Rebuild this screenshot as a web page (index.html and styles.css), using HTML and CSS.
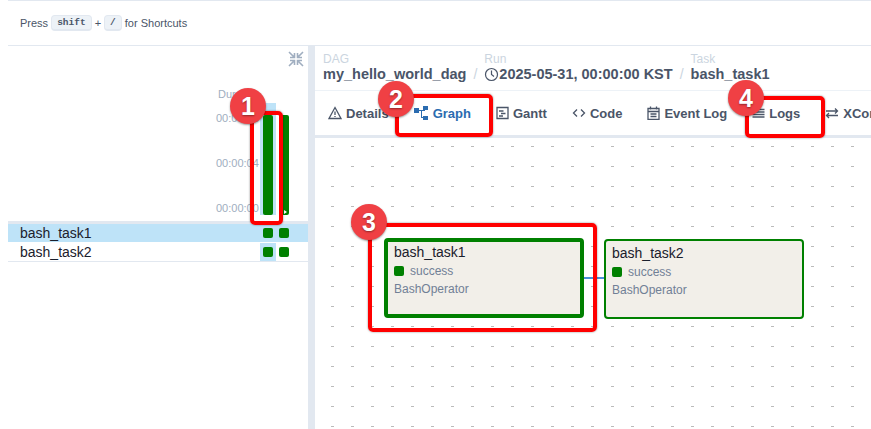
FILE: index.html
```html
<!DOCTYPE html>
<html lang="en">

<head>
    <meta charset="UTF-8">
    <title>my_hello_world_dag</title>
    <link rel="stylesheet" href="styles.css">
</head>

<body>
    <div class="page">
        <header class="shortcuts">
            <span>Press</span>
            <kbd>shift</kbd>
            <span>+</span>
            <kbd>/</kbd>
            <span>for Shortcuts</span>
        </header>

        <main class="main">
            <section class="left">
                <div class="collapse">
                    <svg width="16" height="16" viewBox="0 0 16 16" fill="none" stroke="#a0aec0" stroke-width="1.6">
                        <path d="M1 1l4.5 4.5M6.5 2v4.500H2M15 1l-4.500 4.500M9.500 2v4.500H14M1 15l4.500-4.500M6.500 14V9.500H2M15 15l-4.500-4.500M9.500 14V9.500H14"/>
                    </svg>
                </div>
                <div class="chart">
                    <div class="duration">Duration</div>
                    <div class="plot">
                        <div class="ticks">
                            <span>00:00:08</span>
                            <span>00:00:04</span>
                            <span>00:00:00</span>
                        </div>
                        <div class="bars">
                            <div class="bar-col selected"><div class="bar"></div></div>
                            <div class="bar-col"><div class="bar"></div><i class="play"></i></div>
                        </div>
                    </div>
                </div>
                <div class="rows-top"></div>
                <div class="row row-on">
                    <span class="name">bash_task1</span>
                    <div class="cells">
                        <div class="cell"><b></b></div>
                        <div class="cell"><b></b></div>
                    </div>
                </div>
                <div class="row">
                    <span class="name">bash_task2</span>
                    <div class="cells">
                        <div class="cell selected"><b></b></div>
                        <div class="cell"><b></b></div>
                    </div>
                </div>
            </section>

            <div class="divider"></div>

            <section class="right">
                <div class="crumbs">
                    <div class="crumb">
                        <small>DAG</small>
                        <strong>my_hello_world_dag</strong>
                    </div>
                    <span class="slash">/</span>
                    <div class="crumb">
                        <small>Run</small>
                        <strong class="run">
                            <svg width="15" height="15" viewBox="0 0 15 15" fill="none" stroke="#4a5568" stroke-width="1.200">
                                <circle cx="7.500" cy="7.500" r="6"/>
                                <path d="M7.500 3.500v4l2.500 2"/>
                            </svg>2025-05-31, 00:00:00 KST
                        </strong>
                    </div>
                    <span class="slash">/</span>
                    <div class="crumb">
                        <small>Task</small>
                        <strong>bash_task1</strong>
                    </div>
                </div>

                <nav class="tabs">
                    <a class="tab">
                        <svg width="14" height="14" viewBox="0 0 14 14" fill="none" stroke="currentColor" stroke-width="1.300">
                            <path d="M7 1.500L13 12.500H1zM7 5.500v3.500M7 10v1"/>
                        </svg>Details
                    </a>
                    <a class="tab active">
                        <svg width="15" height="14" viewBox="0 0 15 14" fill="currentColor">
                            <path d="M0 2h5v5H0zM9 0h5v4H9zM9 10h5v4H9zM5 4h6v1H8v6h3v1H7V5H5z"/>
                        </svg>Graph
                    </a>
                    <a class="tab">
                        <svg width="13" height="14" viewBox="0 0 13 14" fill="none" stroke="currentColor" stroke-width="1.300">
                            <path d="M1 1.500h11v11H1zM3 5h4.500M5 7.500h4.500M3 10h4"/>
                        </svg>Gantt
                    </a>
                    <a class="tab">
                        <svg width="14" height="14" viewBox="0 0 14 14" fill="none" stroke="currentColor" stroke-width="1.300">
                            <path d="M5 3.500L1.500 7 5 10.500M9 3.500L12.500 7 9 10.500"/>
                        </svg>Code
                    </a>
                    <a class="tab">
                        <svg width="13" height="14" viewBox="0 0 13 14" fill="none" stroke="currentColor" stroke-width="1.300">
                            <path d="M1 2.500h11v11H1zM3.500 0.500v3M9.500 0.500v3M1 5.500h11M3.500 8h6M3.500 10.500h6"/>
                        </svg>Event Log
                    </a>
                    <a class="tab">
                        <svg width="13" height="14" viewBox="0 0 13 14" fill="none" stroke="currentColor" stroke-width="1.300">
                            <path d="M0.500 3.500h12M0.500 6h12M0.500 8.500h12M0.500 11h12"/>
                        </svg>Logs
                    </a>
                    <a class="tab">
                        <svg width="14" height="14" viewBox="0 0 14 14" fill="none" stroke="currentColor" stroke-width="1.300">
                            <path d="M1 5h11.500M10 2.500L12.500 5 10 7.500M13 9.500H1.500M4 7l-2.500 2.500L4 12"/>
                        </svg>XCom
                    </a>
                </nav>

                <div class="canvas">
                    <div class="edge"></div>
                    <div class="node node-on">
                        <div class="node-name">bash_task1</div>
                        <div class="node-state"><b></b>success</div>
                        <div class="node-type">BashOperator</div>
                    </div>
                    <div class="node node-two">
                        <div class="node-name">bash_task2</div>
                        <div class="node-state"><b></b>success</div>
                        <div class="node-type">BashOperator</div>
                    </div>
                </div>
            </section>
        </main>

        <div class="mark mark-1"></div>
        <div class="mark mark-2"></div>
        <div class="mark mark-3"></div>
        <div class="mark mark-4"></div>
        <div class="badge badge-1">1</div>
        <div class="badge badge-2">2</div>
        <div class="badge badge-3">3</div>
        <div class="badge badge-4">4</div>
    </div>
</body></html>
```

FILE: styles.css
```css
* {
    box-sizing: border-box;
}

body {
    margin: 0;
    background: white;
    font-family: "Liberation Sans", Arial, sans-serif;
    color: #2d3748;
}

.page {
    position: relative;
    width: 871px;
    height: 429px;
    padding-left: 8px;
    overflow: hidden;
}

/* top bar */
.shortcuts {
    display: flex;
    align-items: center;
    gap: 3px;
    height: 46px;
    padding: 0 0 0 12px;
    border-top: 1px solid #e2e8f0;
    border-bottom: 1px solid #e2e8f0;
    font-size: 11px;
    color: #4a5568;
}

kbd {
    padding: 1px 5px;
    border: 1px solid #e2e8f0;
    border-bottom-width: 2px;
    border-radius: 4px;
    background: #edf2f7;
    font-family: "Liberation Mono", monospace;
    font-size: 9.500px;
    font-weight: bold;
    line-height: 11px;
}

.main {
    display: flex;
    height: 383px;
}

/* left side */
.left {
    width: 300px;
    flex: none;
}

.collapse {
    display: flex;
    justify-content: flex-end;
    height: 40px;
    padding: 5px 4px 0 0;
}

.chart {
    height: 135px;
}

.duration {
    height: 17px;
    padding: 2px 0 0 210px;
    font-size: 11px;
    color: #a0aec0;
}

.plot {
    display: flex;
    height: 112px;
    padding-left: 208px;
}

.ticks {
    display: flex;
    flex-direction: column;
    justify-content: space-between;
    width: 44px;
    padding: 9px 0 0;
    font-size: 11px;
    line-height: 13px;
    color: #a0aec0;
}

.bars {
    display: flex;
}

.bar-col {
    position: relative;
    width: 16px;
    padding: 12px 3px 0;
}

.selected {
    background: #bee3f8;
}

.bar {
    height: 100px;
    background: green;
    border-radius: 2px;
}

.bar-col + .bar-col {
    margin-left: 0;
}

.play {
    position: absolute;
    right: 5px;
    bottom: 1px;
    border-left: 3px solid white;
    border-top: 2px solid transparent;
    border-bottom: 2px solid transparent;
}

.rows-top {
    height: 3px;
    background: #e2e8f0;
}

.row {
    display: flex;
    justify-content: space-between;
    height: 19px;
    border-bottom: 1px solid #e2e8f0;
    font-size: 14px;
    line-height: 18px;
}

.row-on {
    background: #bee3f8;
    border-bottom-color: white;
}

.name {
    padding-left: 12px;
    color: #1a202c;
}

.cells {
    display: flex;
    margin-right: 16px;
}

.cell {
    display: flex;
    align-items: center;
    justify-content: center;
    width: 16px;
    height: 18px;
}

.cell b {
    width: 10px;
    height: 10px;
    border-radius: 2px;
    background: green;
}

.divider {
    width: 7px;
    flex: none;
    background: #e2e8f0;
}

/* right side */
.right {
    flex: 1;
    min-width: 0;
}

.crumbs {
    display: flex;
    align-items: flex-end;
    gap: 5px;
    height: 45px;
    padding: 0 0 8px 8px;
    border-bottom: 1px solid #edf2f7;
}

.crumb small {
    display: block;
    font-size: 12px;
    line-height: 13px;
    color: #cbd5e0;
}

.crumb strong {
    display: block;
    font-size: 14.500px;
    line-height: 16px;
    color: #4a5568;
}

.crumb .run {
    display: flex;
    align-items: center;
}

.slash {
    padding: 0 2px;
    font-size: 14px;
    line-height: 16px;
    color: #cbd5e0;
}

.tabs {
    display: flex;
    height: 47px;
    padding-left: 13px;
    gap: 25px;
    border-bottom: 3px solid #e2e8f0;
    white-space: nowrap;
}

.tab {
    display: flex;
    align-items: center;
    gap: 4px;
    font-size: 13px;
    font-weight: bold;
    color: #4a5568;
}

.active {
    color: #2b6cb0;
}

.canvas {
    position: relative;
    height: 291px;
    background-image: radial-gradient(ellipse 2px 1px at 17.500px 8.500px, #bbb 90%, transparent);
    background-size: 20px 20px;
}

.node {
    position: absolute;
    width: 200px;
    height: 80px;
    border: 2px solid green;
    border-radius: 4px;
    background: #f2efe9;
    padding: 4px 6px;
}

.node-on {
    left: 69px;
    top: 100px;
    border-width: 4px;
    padding: 2px 6px;
}

.node-two {
    left: 289px;
    top: 101px;
}

.node-name {
    font-size: 14px;
    line-height: 17px;
    color: #1a202c;
}

.node-state {
    display: flex;
    align-items: center;
    gap: 6px;
    margin-top: 2px;
    font-size: 12px;
    line-height: 16px;
    color: #718096;
}

.node-state b {
    width: 10px;
    height: 10px;
    border-radius: 2px;
    background: green;
}

.node-type {
    margin-top: 2px;
    font-size: 12px;
    line-height: 16px;
    color: #718096;
}

.edge {
    position: absolute;
    left: 267px;
    top: 139px;
    width: 24px;
    height: 2px;
    background: #4a90d9;
}

/* red notes drawn on top of the screenshot */
.mark {
    position: absolute;
    border: 4px solid #f00;
    border-radius: 5px;
    box-shadow: 0 0 2px rgba(0, 0, 0, 0.5);
}

.mark-1 {
    left: 250px;
    top: 111px;
    width: 33px;
    height: 114px;
}

.mark-2 {
    left: 395px;
    top: 94px;
    width: 98px;
    height: 43px;
}

.mark-3 {
    left: 368px;
    top: 223px;
    width: 229px;
    height: 109px;
}

.mark-4 {
    left: 745px;
    top: 96px;
    width: 80px;
    height: 42px;
}

.badge {
    position: absolute;
    width: 36px;
    height: 36px;
    border-radius: 50%;
    background: #f04044;
    color: white;
    font-size: 25px;
    font-weight: bold;
    line-height: 36px;
    text-align: center;
    box-shadow: 0 1px 2px rgba(0, 0, 0, 0.4);
    text-shadow: 0 1px 2px rgba(0, 0, 0, 0.4);
}

.badge-1 {
    left: 230px;
    top: 88px;
}

.badge-2 {
    left: 378px;
    top: 81px;
}

.badge-3 {
    left: 351px;
    top: 204px;
}

.badge-4 {
    left: 728px;
    top: 80px;
}
```
